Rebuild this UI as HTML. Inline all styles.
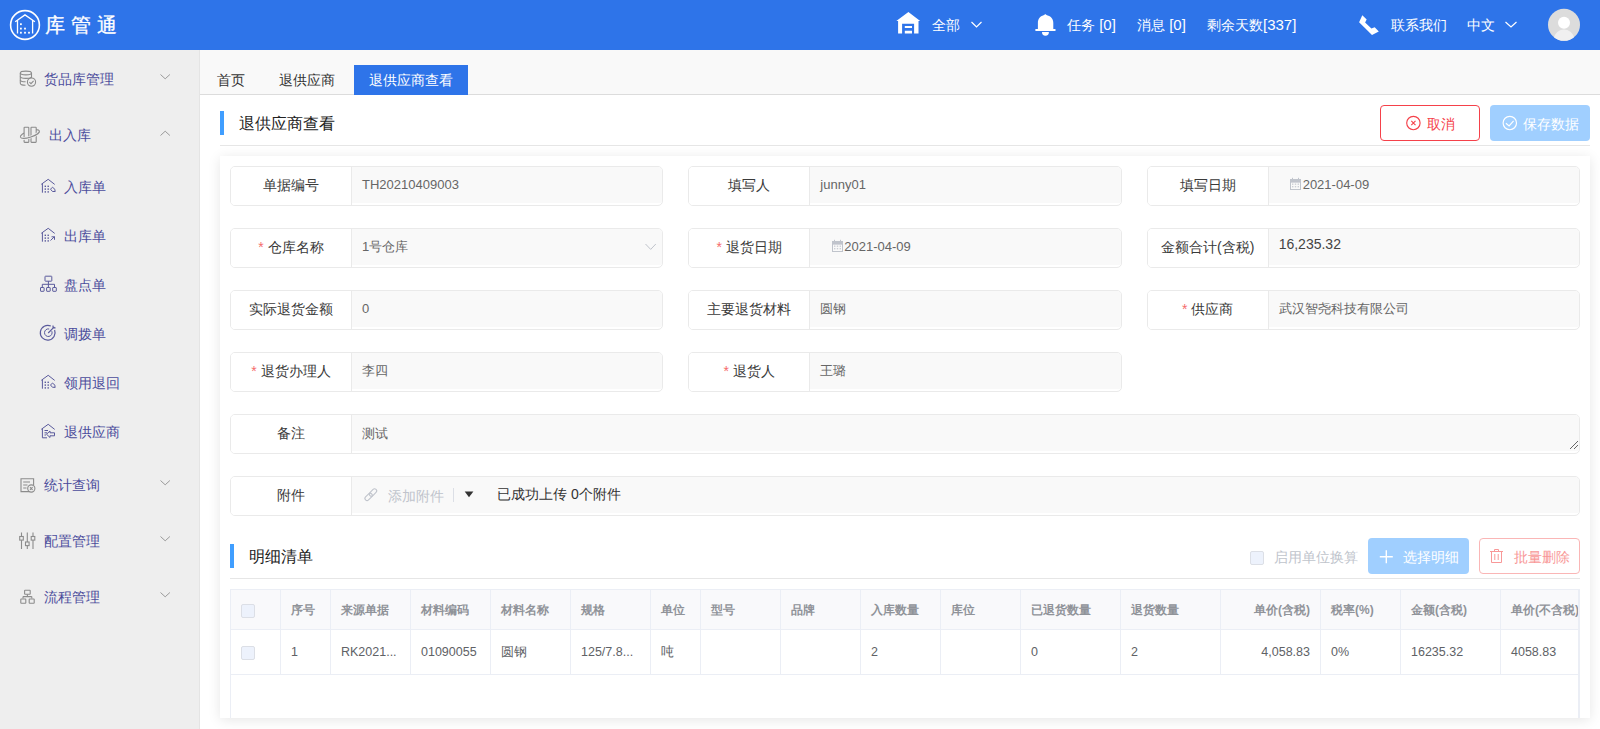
<!DOCTYPE html>
<html><head><meta charset="utf-8">
<style>
*{box-sizing:border-box;margin:0;padding:0}
html,body{width:1600px;height:729px;overflow:hidden;background:#fff;font-family:"Liberation Sans",sans-serif;font-size:14px;color:#333}
svg{position:absolute;overflow:visible}
.abs{position:absolute}
.t{position:absolute;white-space:nowrap;line-height:1}
#hdr{position:absolute;left:0;top:0;width:1600px;height:50px;background:#2e74e9;color:#fff}
#side{position:absolute;left:0;top:50px;width:200px;height:679px;background:#eeeeee;border-right:1px solid #e4e4e4}
#tabs{position:absolute;left:200px;top:50px;width:1400px;height:45px;background:#f9f9f9;border-bottom:1px solid #dcdcdc}
.menu{color:#4b4c9c}
#cardbg{position:absolute;left:220px;top:156px;width:1370px;height:562px;background:#fff;box-shadow:0 2px 12px rgba(0,0,0,.1)}
.fi{position:absolute;width:433.33px;height:40px;border:1px solid #eaeaea;border-radius:5px;overflow:hidden;background:#fff}
.fi .lb{position:absolute;left:0;top:0;width:121px;height:38px;background:#fff;border-right:1px solid #eaeaea;text-align:center;line-height:36px;color:#3a3a3a}
.fi .lb i{font-style:normal;color:#f56c6c;margin-right:4px}
.fi .in{position:absolute;left:121px;top:0;right:0;height:36px;line-height:35px;padding-left:10px;color:#666;font-size:13px;background:#f9f9f9}
.num{}
.btn{position:absolute;border-radius:4px;font-size:14px}
.cbx{position:absolute;width:14px;height:14px;border:1px solid #dcdfe6;background:#edf2fc;border-radius:2px}
#tbl{position:absolute;left:230px;top:589px;width:1350px;height:129px;border-left:1px solid #ebeef5;border-top:1px solid #ebeef5;border-right:2px solid #ebeef5;overflow:hidden}
.thr{position:absolute;left:0;top:0;width:1600px;height:40px;background:#f9f9fb;border-bottom:1px solid #ebeef5}
.tdr{position:absolute;left:0;top:40px;width:1600px;height:45px;border-bottom:1px solid #ebeef5}
.th,.td{position:absolute;top:0;height:100%;border-right:1px solid #ebeef5;padding:0 10px;white-space:nowrap;overflow:hidden}
.th{line-height:41px;font-size:12px;color:#909399;font-weight:bold}
.td{line-height:44px;font-size:12.5px;color:#606266}
.r{text-align:right}
</style></head><body>
<div id="hdr">
  <svg style="left:0;top:0" width="50" height="50" viewBox="0 0 50 50" fill="none" stroke="#fff">
    <circle cx="25" cy="25" r="14.4" stroke-width="1.6"/>
    <path d="M15.2 21.7 L25 14.9 L34.9 21.7 M17.5 19.8 V33.5 M32.6 19.8 V33.5" stroke-width="1.3"/>
    <g fill="#fff" stroke="none">
      <rect x="20" y="23.3" width="1.8" height="1.8"/>
      <rect x="20" y="27.7" width="1.8" height="1.8"/><rect x="24.1" y="27.7" width="1.8" height="1.8"/>
      <rect x="20" y="31.8" width="1.8" height="1.8"/><rect x="24.1" y="31.8" width="1.8" height="1.8"/><rect x="28.1" y="31.8" width="1.8" height="1.8"/>
    </g>
  </svg>
  <div class="t" style="left:45px;top:15px;font-size:20px;letter-spacing:6px;-webkit-text-stroke:0.3px #fff">库管通</div>
  <svg style="left:0;top:0" width="1" height="1">
    <path fill="#fff" d="M896.3 20.9 L908.4 12.1 L920.2 20.9 L918.5 20.9 L918.5 33.5 L914.1 33.5 L914.1 23.7 L902.1 23.7 L902.1 33.5 L898.1 33.5 L898.1 20.9 Z M904.8 25.9 H912 V28 H904.8 Z M904.8 30.8 H912 V33.5 H904.8 Z"/>
    <path fill="none" stroke="#fff" stroke-width="1.2" d="M971.5 22 L976.5 27 L981.5 22"/>
    <path fill="#fff" d="M1045.3 14 C1046 14.8 1046.5 15 1047 15.2 C1051 16 1053.3 19 1053.3 23 V29.1 H1055.5 V31 H1035.4 V29.1 H1037.9 V23 C1037.9 19 1040 16 1043.6 15.2 C1044.2 15 1044.6 14.8 1045.3 14 Z M1042 31.9 H1048.9 A3.45 3.8 0 0 1 1042 31.9 Z"/>
    <path fill="#fff" d="M1362.3 15.2 L1366.7 19.5 L1365.1 22.6 L1371.4 28.6 L1374.7 27.2 L1378.8 31.6 L1372 34.9 L1359.1 22.3 Z"/>
    <path fill="none" stroke="#fff" stroke-width="1.2" d="M1505.5 22 L1511 27 L1516.5 22"/>
    <circle cx="1564" cy="24.8" r="16" fill="#dcdcdc"/>
    <path d="M1553.88 37.195 A10.5 10.5 0 0 1 1574.12 37.195 A16 16 0 0 1 1553.88 37.195 Z" fill="#f0f0f0"/>
    <circle cx="1564" cy="22.7" r="6" fill="#fff"/>
  </svg>
  <div class="t" style="left:932px;top:18px">全部</div>
  <div class="t" style="left:1067px;top:17px">任务<span style="font-size:15px"> [0]</span></div>
  <div class="t" style="left:1137px;top:17px">消息<span style="font-size:15px"> [0]</span></div>
  <div class="t" style="left:1207px;top:17px">剩余天数<span style="font-size:15px">[337]</span></div>
  <div class="t" style="left:1391px;top:18px">联系我们</div>
  <div class="t" style="left:1467px;top:18px">中文</div>
</div>
<div id="side">
  <div class="t menu" style="left:44px;top:22px">货品库管理</div>
  <div class="t menu" style="left:49px;top:78px">出入库</div>
  <div class="t menu" style="left:64px;top:130px">入库单</div>
  <div class="t menu" style="left:64px;top:179px">出库单</div>
  <div class="t menu" style="left:64px;top:228px">盘点单</div>
  <div class="t menu" style="left:64px;top:277px">调拨单</div>
  <div class="t menu" style="left:64px;top:326px">领用退回</div>
  <div class="t menu" style="left:64px;top:375px">退供应商</div>
  <div class="t menu" style="left:44px;top:428px">统计查询</div>
  <div class="t menu" style="left:44px;top:484px">配置管理</div>
  <div class="t menu" style="left:44px;top:540px">流程管理</div>
</div>
<svg style="left:0;top:0" width="1" height="1" fill="none" stroke-width="1">
  <!-- chevrons -->
  <g stroke="#9a9a9a">
    <path d="M160.5 74.5 L165.2 78.8 L169.9 74.5"/>
    <path d="M160.5 135.5 L165.2 131.2 L169.9 135.5"/>
    <path d="M160.5 480.5 L165.2 484.8 L169.9 480.5"/>
    <path d="M160.5 536.5 L165.2 540.8 L169.9 536.5"/>
    <path d="M160.5 592.5 L165.2 596.8 L169.9 592.5"/>
  </g>
  <!-- top-level icons grey -->
  <g stroke="#8c8c8c" stroke-width="1.1">
    <!-- database -->
    <ellipse cx="25.9" cy="73" rx="5.6" ry="1.9"/>
    <path d="M20.3 73 V83.3 C20.3 84.5 22.5 85.3 25.5 85.3 M31.5 73 V78"/>
    <path d="M20.3 76.5 C20.3 77.6 22.6 78.4 25.9 78.4 C28.5 78.4 30.5 78 31.3 77.3"/>
    <path d="M20.3 79.9 C20.3 81 22.6 81.7 25.6 81.7 M20.3 83.3"/>
    <circle cx="31.5" cy="82.1" r="4.1"/>
    <path d="M29.4 82.1 L31 83.6 L33.6 80.8"/>
    <!-- in/out -->
    <ellipse cx="29.9" cy="134" rx="10" ry="3.2" transform="rotate(-18 29.9 134)"/>
    <rect x="28.6" y="129.5" width="2.8" height="4" fill="#eeeeee" stroke="none"/>
    <rect x="24.1" y="127.2" width="4.7" height="15.2" rx="0.6" fill="#eeeeee"/>
    <rect x="31" y="127.2" width="5.2" height="15.2" rx="0.6" fill="#eeeeee"/>
    <path d="M20.39 137.09 A10 3.2 -18 0 0 39.41 130.91" stroke="#eeeeee" stroke-width="2.8"/>
    <path d="M20.39 137.09 A10 3.2 -18 0 0 39.41 130.91"/>
    <!-- stats doc -->
    <path d="M29.5 491.6 H21 V478.7 H33.6 V485"/>
    <path d="M23.2 482 H30 M23.2 485 H27.5 M23.2 488 H26.5"/>
    <circle cx="31.3" cy="488.5" r="3.6"/>
    <path d="M30 487.2 L32.6 489.8 M32.6 487.2 L30 489.8"/>
    <!-- sliders -->
    <path d="M21.5 532.5 V549 M27.3 532.5 V549 M33 532.5 V549"/>
    <rect x="19.7" y="536.5" width="3.6" height="3.6" fill="#eeeeee"/>
    <rect x="25.5" y="542" width="3.6" height="3.6" fill="#eeeeee"/>
    <rect x="31.2" y="536.5" width="3.6" height="3.6" fill="#eeeeee"/>
    <!-- flow -->
    <rect x="24.6" y="590.3" width="5.6" height="4" rx="0.5"/>
    <path d="M27.4 594.3 V596.6 M23 596.6 H31.8 M23 596.6 V598.5 M31.8 596.6 V598.5"/>
    <rect x="20.8" y="599" width="5" height="4.3" rx="0.5"/>
    <rect x="29.2" y="599" width="5" height="4.3" rx="0.5"/>
  </g>
  <!-- sub icons purple -->
  <g stroke="#5a5a9c" stroke-width="1">
    <!-- house 1 -->
    <path d="M41.3 184.3 L48.2 179.3 L54.7 184.4 M42.4 183.6 V192.7"/>
    <g fill="#5a5a9c" stroke="none">
      <rect x="44.6" y="185.6" width="1.4" height="1.4"/><rect x="47.5" y="185.6" width="1.4" height="1.4"/>
      <rect x="44.6" y="188.4" width="1.4" height="1.4"/><rect x="47.5" y="188.4" width="1.4" height="1.4"/>
      <rect x="44.6" y="191.2" width="1.4" height="1.4"/><rect x="47.5" y="191.2" width="1.4" height="1.4"/>
    </g>
    <path d="M50.5 189.2 L52.5 187.2 L55 189.5 V192 M50.5 189.2 L52.5 191.5 H55"/>
    <!-- house 2 -->
    <path d="M41.3 233.3 L48.2 228.3 L54.7 233.4 M42.4 232.6 V241.7"/>
    <g fill="#5a5a9c" stroke="none">
      <rect x="44.6" y="234.6" width="1.4" height="1.4"/><rect x="47.5" y="234.6" width="1.4" height="1.4"/>
      <rect x="44.6" y="237.4" width="1.4" height="1.4"/><rect x="47.5" y="237.4" width="1.4" height="1.4"/>
      <rect x="44.6" y="240.2" width="1.4" height="1.4"/><rect x="47.5" y="240.2" width="1.4" height="1.4"/>
    </g>
    <path d="M50.5 240.5 L54.5 236.6 M51.5 236.8 H54.5 V239.8"/>
    <!-- org chart -->
    <rect x="45" y="276.2" width="6.8" height="5" rx="0.5"/>
    <path d="M48.4 281.2 V284.3 M42.3 287.5 V284.3 H54.5 V287.5 M48.4 284.3 V287.5"/>
    <rect x="40.5" y="287.5" width="3.6" height="3.8" rx="0.4"/>
    <rect x="46.6" y="287.5" width="3.6" height="3.8" rx="0.4"/>
    <rect x="52.7" y="287.5" width="3.6" height="3.8" rx="0.4"/>
    <!-- target -->
    <path d="M54.6 330 A7.4 7.4 0 1 1 50.8 326" stroke-width="1.2"/>
    <path d="M51.8 331.2 A3.8 3.8 0 1 1 49.2 329"/>
    <path d="M48.2 333 L54.3 326.8 M53 325.5 V327.9 H55.5" stroke-width="1.1"/>
    <!-- house 3 -->
    <path d="M41.3 380.3 L48.2 375.3 L54.7 380.4 M42.4 379.6 V388.7"/>
    <g fill="#5a5a9c" stroke="none">
      <rect x="44.6" y="381.6" width="1.4" height="1.4"/><rect x="47.5" y="381.6" width="1.4" height="1.4"/>
      <rect x="44.6" y="384.4" width="1.4" height="1.4"/><rect x="47.5" y="384.4" width="1.4" height="1.4"/>
      <rect x="44.6" y="387.2" width="1.4" height="1.4"/><rect x="47.5" y="387.2" width="1.4" height="1.4"/>
    </g>
    <path d="M50.5 385 L52.5 383 L55 385.3 V387.8 M50.5 385 L52.5 387.3 H55"/>
    <!-- house 4 (return supplier) -->
    <path d="M41.3 429.3 L48.2 424.3 L54.7 429.4 M42.4 428.6 V437.8 H47"/>
    <path d="M44.5 430.5 H48 M44.5 432.8 H47 M44.5 435 H46"/>
    <path d="M46.5 434.2 L50 431 V432.8 H54.5 V435.8 H50 V437.5 Z"/>
  </g>
</svg>
<div id="tabs">
  <div class="t" style="left:17px;top:23px">首页</div>
  <div class="t" style="left:79px;top:23px">退供应商</div>
  <div class="abs" style="left:154px;top:15px;width:114px;height:30px;background:#2e74e9"></div>
  <div class="t" style="left:169px;top:23px;color:#fff">退供应商查看</div>
</div>
<div id="cardbg"></div>
<div class="abs" style="left:220px;top:111px;width:4px;height:24px;background:#409eff"></div>
<div class="t" style="left:239px;top:116px;font-size:16px;color:#222">退供应商查看</div>
<div class="abs" style="left:220px;top:145px;width:1370px;height:1px;background:#e6e6e6"></div>
<div class="btn" style="left:1380px;top:105px;width:100px;height:36px;border:1px solid #f5414a;background:#fff"></div>
<div class="t" style="left:1427px;top:117px;color:#f5414a">取消</div>
<div class="btn" style="left:1490px;top:105px;width:100px;height:36px;background:#a0cfff"></div>
<div class="t" style="left:1523px;top:117px;color:#fff">保存数据</div>
<svg style="left:0;top:0" width="1" height="1" fill="none">
  <circle cx="1413.4" cy="123" r="6.7" stroke="#f5414a" stroke-width="1.15"/>
  <path d="M1411.3 120.9 L1415.5 125.1 M1415.5 120.9 L1411.3 125.1" stroke="#f5414a" stroke-width="1.1"/>
  <circle cx="1509.8" cy="123" r="6.7" stroke="#fff" stroke-width="1.15"/>
  <path d="M1505.9 123.3 L1509.1 126 L1513.6 120.8" stroke="#fff" stroke-width="1.15"/>
</svg>

<div class="fi" style="left:230px;top:166px"><div class="lb">单据编号</div><div class="in num">TH20210409003</div></div>
<div class="fi" style="left:688.33px;top:166px"><div class="lb">填写人</div><div class="in">junny01</div></div>
<div class="fi" style="left:1146.67px;top:166px"><div class="lb">填写日期</div><div class="in num" style="padding-left:34px">2021-04-09</div></div>
<div class="fi" style="left:230px;top:228px"><div class="lb"><i>*</i>仓库名称</div><div class="in">1号仓库</div></div>
<div class="fi" style="left:688.33px;top:228px"><div class="lb"><i>*</i>退货日期</div><div class="in num" style="padding-left:34px">2021-04-09</div></div>
<div class="fi" style="left:1146.67px;top:228px"><div class="lb">金额合计(含税)</div><div class="in" style="font-size:14px;line-height:30px;color:#444">16,235.32</div></div>
<div class="fi" style="left:230px;top:290px"><div class="lb">实际退货金额</div><div class="in">0</div></div>
<div class="fi" style="left:688.33px;top:290px"><div class="lb">主要退货材料</div><div class="in">圆钢</div></div>
<div class="fi" style="left:1146.67px;top:290px"><div class="lb"><i>*</i>供应商</div><div class="in">武汉智尧科技有限公司</div></div>
<div class="fi" style="left:230px;top:352px"><div class="lb"><i>*</i>退货办理人</div><div class="in">李四</div></div>
<div class="fi" style="left:688.33px;top:352px"><div class="lb"><i>*</i>退货人</div><div class="in">王璐</div></div>
<div class="fi" style="left:230px;top:414px;width:1350px"><div class="lb">备注</div><div class="in" style="line-height:38px">测试</div></div>
<div class="fi" style="left:230px;top:476px;width:1350px"><div class="lb">附件</div><div class="in"></div></div>
<div class="t" style="left:388px;top:489px;color:#c0c4cc">添加附件</div>
<div class="abs" style="left:453px;top:488px;width:1px;height:14px;background:#dcdfe6"></div>
<div class="t" style="left:497px;top:487px;color:#333">已成功上传 0个附件</div>
<svg style="left:0;top:0" width="1" height="1" fill="none">
  <!-- calendars -->
  <g stroke="#c0c4cc" stroke-width="1">
    <rect x="1290.5" y="179.5" width="10" height="10"/>
    <rect x="1290.5" y="179.5" width="10" height="2.6" fill="#c0c4cc"/>
    <path d="M1292.5 177.8 V180.5 M1298.5 177.8 V180.5"/>
    <g fill="#c0c4cc" stroke="none"><rect x="1292" y="183.6" width="1.4" height="1.1"/><rect x="1294.8" y="183.6" width="1.4" height="1.1"/><rect x="1297.6" y="183.6" width="1.4" height="1.1"/><rect x="1292" y="186.2" width="1.4" height="1.1"/><rect x="1294.8" y="186.2" width="1.4" height="1.1"/><rect x="1297.6" y="186.2" width="1.4" height="1.1"/></g>
    <rect x="832.5" y="241.5" width="10" height="10"/>
    <rect x="832.5" y="241.5" width="10" height="2.6" fill="#c0c4cc"/>
    <path d="M834.5 239.8 V242.5 M840.5 239.8 V242.5"/>
    <g fill="#c0c4cc" stroke="none"><rect x="834" y="245.6" width="1.4" height="1.1"/><rect x="836.8" y="245.6" width="1.4" height="1.1"/><rect x="839.6" y="245.6" width="1.4" height="1.1"/><rect x="834" y="248.2" width="1.4" height="1.1"/><rect x="836.8" y="248.2" width="1.4" height="1.1"/><rect x="839.6" y="248.2" width="1.4" height="1.1"/></g>
    </g>
  <!-- select chevron -->
  <path d="M645.5 244 L650.7 249.4 L655.8 244" stroke="#c0c4cc" stroke-width="1"/>
  <!-- textarea resize -->
  <path d="M1570 449 L1578 441 M1574 449 L1578 445" stroke="#666" stroke-width="1"/>
  <!-- link icon -->
  <g stroke="#c0c4cc" stroke-width="1.1" transform="rotate(-45 370.8 494.7)">
    <rect x="363.4" y="492.6" width="8.6" height="4.2" rx="2.1"/>
    <rect x="369.6" y="492.6" width="8.6" height="4.2" rx="2.1"/>
  </g>
  <!-- dropdown triangle -->
  <path d="M464.7 491.5 H473.4 L469 497.2 Z" fill="#333"/>
</svg>

<div class="abs" style="left:230px;top:544px;width:4px;height:24px;background:#409eff"></div>
<div class="t" style="left:249px;top:549px;font-size:16px;color:#222">明细清单</div>
<div class="abs" style="left:230px;top:578px;width:1350px;height:1px;background:#e6e6e6"></div>
<div class="cbx" style="left:1250px;top:551px"></div>
<div class="t" style="left:1274px;top:550px;color:#c0c4cc">启用单位换算</div>
<div class="btn" style="left:1368px;top:538px;width:101px;height:36px;background:#a0cfff"></div>
<div class="t" style="left:1403px;top:550px;color:#fff">选择明细</div>
<div class="btn" style="left:1479px;top:538px;width:101px;height:36px;border:1px solid #fab6b6;background:#fff"></div>
<div class="t" style="left:1514px;top:550px;color:#f89898">批量删除</div>
<svg style="left:0;top:0" width="1" height="1" fill="none">
  <path d="M1386.3 550.3 V563.2 M1379.8 556.8 H1392.8" stroke="#fff" stroke-width="1.4"/>
  <g stroke="#f89898" stroke-width="1">
    <path d="M1490 551.5 H1503 M1494.5 551.5 V549.5 H1498.5 V551.5 M1491.5 551.5 V562.5 H1501.5 V551.5 M1494.8 554 V560 M1498.2 554 V560"/>
  </g>
</svg>
<div id="tbl">
<div class="thr">
<div class="th" style="left:0px;width:50px"><span class="cbx" style="left:10px;top:14px"></span></div>
<div class="th" style="left:50px;width:50px">序号</div>
<div class="th" style="left:100px;width:80px">来源单据</div>
<div class="th" style="left:180px;width:80px">材料编码</div>
<div class="th" style="left:260px;width:80px">材料名称</div>
<div class="th" style="left:340px;width:80px">规格</div>
<div class="th" style="left:420px;width:50px">单位</div>
<div class="th" style="left:470px;width:80px">型号</div>
<div class="th" style="left:550px;width:80px">品牌</div>
<div class="th" style="left:630px;width:80px">入库数量</div>
<div class="th" style="left:710px;width:80px">库位</div>
<div class="th" style="left:790px;width:100px">已退货数量</div>
<div class="th" style="left:890px;width:100px">退货数量</div>
<div class="th r" style="left:990px;width:100px">单价(含税)</div>
<div class="th" style="left:1090px;width:80px">税率(%)</div>
<div class="th" style="left:1170px;width:100px">金额(含税)</div>
<div class="th" style="left:1270px;width:100px">单价(不含税)</div>
</div>
<div class="tdr">
<div class="td" style="left:0px;width:50px"><span class="cbx" style="left:10px;top:16px"></span></div>
<div class="td" style="left:50px;width:50px">1</div>
<div class="td" style="left:100px;width:80px">RK2021...</div>
<div class="td" style="left:180px;width:80px">01090055</div>
<div class="td" style="left:260px;width:80px">圆钢</div>
<div class="td" style="left:340px;width:80px">125/7.8...</div>
<div class="td" style="left:420px;width:50px">吨</div>
<div class="td" style="left:470px;width:80px"></div>
<div class="td" style="left:550px;width:80px"></div>
<div class="td" style="left:630px;width:80px">2</div>
<div class="td" style="left:710px;width:80px"></div>
<div class="td" style="left:790px;width:100px">0</div>
<div class="td" style="left:890px;width:100px">2</div>
<div class="td r" style="left:990px;width:100px">4,058.83</div>
<div class="td" style="left:1090px;width:80px">0%</div>
<div class="td" style="left:1170px;width:100px">16235.32</div>
<div class="td" style="left:1270px;width:100px">4058.83</div>
</div>
</div>
</body></html>
